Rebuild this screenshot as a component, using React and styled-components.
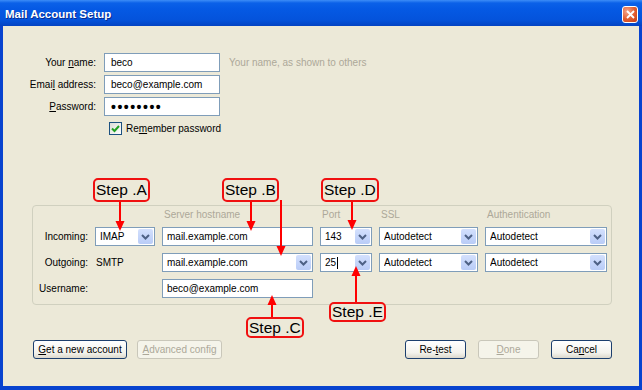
import styled, { createGlobalStyle } from 'styled-components';

const GlobalStyle = createGlobalStyle`
	html, body {
		margin: 0;
		padding: 0;
		background: #ffffff;
	}
	body {
		font-family: 'Liberation Sans', Arial, sans-serif;
		font-size: 10px;
		color: #000;
	}
`;

const Window = styled.div`
	position: relative;
	width: 642px;
	height: 390px;
	box-sizing: border-box;
	display: flex;
	flex-direction: column;
	background: #0843CF;
	overflow: hidden;
`;

const TitleBar = styled.div`
	flex: none;
	height: 26px;
	box-sizing: border-box;
	padding: 2px 4px 0 5px;
	display: flex;
	align-items: center;
	justify-content: space-between;
	background: linear-gradient(#3D8DF7 0px, #0B61E8 3px, #0559E4 9px, #0453DB 20px, #0443C2 26px);
`;

const Title = styled.span`
	color: #fff;
	font-weight: bold;
	font-size: 11.5px;
	text-shadow: 1px 1px 0 #0B2C8E;
`;

const CloseButton = styled.span`
	width: 16px;
	height: 17px;
	box-sizing: border-box;
	border: 1px solid #fff;
	border-radius: 3px;
	background: radial-gradient(circle at 30% 30%, #F4A68C, #E25B2E 55%, #C23E16);
	display: flex;
	align-items: center;
	justify-content: center;
`;

const Body = styled.div`
	flex: 1;
	margin: 0 3px 4px 3px;
	background: #ECE9D8;
	display: flex;
	flex-direction: column;
`;

const IdentityGrid = styled.div`
	display: grid;
	grid-template-columns: 93px 116px auto;
	grid-auto-rows: 19px;
	column-gap: 8px;
	row-gap: 3px;
	align-items: center;
	padding-top: 27px;
`;

const FieldLabel = styled.span`
	text-align: right;
	white-space: nowrap;
`;

const TextBox = styled.div`
	height: 19px;
	box-sizing: border-box;
	border: 1px solid #7F9DB9;
	background: #fff;
	padding-left: ${(p) => (p.$wide ? 4 : 6)}px;
	display: flex;
	align-items: center;
	white-space: nowrap;
	overflow: hidden;
`;

const Dots = styled.span`
	font-size: 14px;
	font-weight: bold;
	letter-spacing: 1.5px;
	line-height: 1;
`;

const Hint = styled.span`
	color: #ACA899;
	margin-left: 1px;
	white-space: nowrap;
`;

const CheckRow = styled.label`
	grid-column: 2 / span 2;
	display: flex;
	align-items: center;
	gap: 4px;
	margin-left: 5px;
`;

const CheckBox = styled.span`
	width: 13px;
	height: 13px;
	box-sizing: border-box;
	border: 1px solid #1C5180;
	background: linear-gradient(135deg, #DCDCD7, #FFFFFF);
	display: flex;
	align-items: center;
	justify-content: center;
`;

const ServerGroup = styled.div`
	margin: 67px 27px 0 29px;
	border: 1px solid #D0D0BF;
	border-radius: 4px;
	padding: 2px 4px 6px 0;
	display: grid;
	grid-template-columns: 55px 60px 151px 52px 99px 122px;
	grid-template-rows: 12px repeat(3, 19px);
	column-gap: 7px;
	row-gap: 7px;
	align-items: center;
`;

const ColumnHead = styled.span`
	color: #ACA899;
	padding-left: 2px;
	white-space: nowrap;
`;

const RowLabel = styled.span`
	text-align: right;
	white-space: nowrap;
`;

const Protocol = styled.span`
	padding-left: 1px;
`;

const ComboBox = styled.div`
	height: 19px;
	box-sizing: border-box;
	border: 1px solid #7F9DB9;
	background: #fff;
	padding-left: 4px;
	display: flex;
	align-items: center;
`;

const ComboText = styled.span`
	flex: 1;
	white-space: nowrap;
	overflow: hidden;
	display: flex;
	align-items: center;
`;

const Caret = styled.span`
	width: 1px;
	height: 12px;
	background: #000;
	margin-left: 1px;
`;

const DropButton = styled.span`
	flex: none;
	width: 15px;
	height: 15px;
	margin-right: 1px;
	border-radius: 2px;
	background: linear-gradient(#D3E0FD, #B9CCF7);
	display: flex;
	align-items: center;
	justify-content: center;
`;

const ButtonRow = styled.div`
	margin-top: 35px;
	padding: 0 27px 0 30px;
	display: flex;
	justify-content: space-between;
`;

const ButtonGroup = styled.div`
	display: flex;
	gap: ${(p) => p.$gap}px;
`;

const Button = styled.button`
	width: ${(p) => p.$w}px;
	height: 19px;
	padding: 0;
	font-family: inherit;
	font-size: 10px;
	border-radius: 3px;
	border: 1px solid ${(p) => (p.disabled ? '#C9C7BA' : '#1C3F6E')};
	color: ${(p) => (p.disabled ? '#ACA899' : '#000')};
	background: ${(p) =>
		p.disabled ? '#F5F4EA' : 'linear-gradient(#FFFFFF, #F3F2EC 70%, #DCD8CC)'};
`;

const Overlay = styled.div`
	position: absolute;
	inset: 0;
	pointer-events: none;
`;

const ArrowLayer = styled.svg`
	position: absolute;
	left: 0;
	top: 0;
`;

const StepTag = styled.span`
	position: absolute;
	left: ${(p) => p.$x}px;
	top: ${(p) => p.$y}px;
	height: ${(p) => p.$h}px;
	box-sizing: border-box;
	padding: 0 1px;
	border: 2px solid #F01010;
	border-radius: 5px;
	background: #ECE9D8;
	font-family: 'Liberation Sans', Arial, sans-serif;
	font-size: 15.5px;
	line-height: ${(p) => p.$h - 4}px;
	color: #000;
	white-space: nowrap;
	display: flex;
	align-items: center;
`;

const Chevron = () => (
	<svg width='9' height='6' viewBox='0 0 9 6'>
		<polyline points='1,1 4.5,4.5 8,1' fill='none' stroke='#4D6185' strokeWidth='2' />
	</svg>
);

const Combo = ({ children }) => (
	<ComboBox>
		<ComboText>{children}</ComboText>
		<DropButton>
			<Chevron />
		</DropButton>
	</ComboBox>
);

const Arrow = ({ x, from, to }) => {
	const dir = to > from ? 1 : -1;
	const base = to - dir * 10;
	return (
		<g>
			<line x1={x} y1={from} x2={x} y2={base} stroke='#FF0000' strokeWidth='2' />
			<polygon points={`${x - 4.5},${base} ${x + 4.5},${base} ${x},${to}`} fill='#FF0000' />
		</g>
	);
};

const arrows = [
	{ x: 120, from: 200, to: 231 },
	{ x: 251, from: 200, to: 231 },
	{ x: 281, from: 200, to: 256 },
	{ x: 352, from: 200, to: 230 },
	{ x: 272, from: 318, to: 295 },
	{ x: 356, from: 304, to: 266 },
];

const steps = [
	{ label: 'Step .A', x: 93, y: 178, h: 24 },
	{ label: 'Step .B', x: 222, y: 178, h: 24 },
	{ label: 'Step .D', x: 321, y: 178, h: 24 },
	{ label: 'Step .C', x: 246, y: 317, h: 21 },
	{ label: 'Step .E', x: 329, y: 302, h: 20 },
];

const App = () => {
	return (
		<>
			<GlobalStyle />
			<Window>
				<TitleBar>
					<Title>Mail Account Setup</Title>
					<CloseButton>
						<svg width='9' height='9' viewBox='0 0 9 9'>
							<path d='M1 1 L8 8 M8 1 L1 8' stroke='#fff' strokeWidth='1.8' />
						</svg>
					</CloseButton>
				</TitleBar>
				<Body>
					<IdentityGrid>
						<FieldLabel>
							Your <u>n</u>ame:
						</FieldLabel>
						<TextBox>beco</TextBox>
						<Hint>Your name, as shown to others</Hint>
						<FieldLabel>
							Emai<u>l</u> address:
						</FieldLabel>
						<TextBox>beco@example.com</TextBox>
						<span />
						<FieldLabel>
							<u>P</u>assword:
						</FieldLabel>
						<TextBox>
							<Dots>••••••••</Dots>
						</TextBox>
						<span />
						<span />
						<CheckRow>
							<CheckBox>
								<svg width='9' height='9' viewBox='0 0 9 9'>
									<path d='M1 4.5 L3.5 7 L8 2' fill='none' stroke='#21A121' strokeWidth='2' />
								</svg>
							</CheckBox>
							<span>
								Re<u>m</u>ember password
							</span>
						</CheckRow>
					</IdentityGrid>

					<ServerGroup>
						<span />
						<span />
						<ColumnHead>Server hostname</ColumnHead>
						<ColumnHead>Port</ColumnHead>
						<ColumnHead>SSL</ColumnHead>
						<ColumnHead>Authentication</ColumnHead>

						<RowLabel>Incoming:</RowLabel>
						<Combo>IMAP</Combo>
						<TextBox $wide>mail.example.com</TextBox>
						<Combo>143</Combo>
						<Combo>Autodetect</Combo>
						<Combo>Autodetect</Combo>

						<RowLabel>Outgoing:</RowLabel>
						<Protocol>SMTP</Protocol>
						<Combo>mail.example.com</Combo>
						<Combo>
							25
							<Caret />
						</Combo>
						<Combo>Autodetect</Combo>
						<Combo>Autodetect</Combo>

						<RowLabel>Username:</RowLabel>
						<span />
						<TextBox $wide>beco@example.com</TextBox>
					</ServerGroup>

					<ButtonRow>
						<ButtonGroup $gap={10}>
							<Button $w={94}>
								<u>G</u>et a new account
							</Button>
							<Button $w={85} disabled>
								<u>A</u>dvanced config
							</Button>
						</ButtonGroup>
						<ButtonGroup $gap={12}>
							<Button $w={61}>
								Re-<u>t</u>est
							</Button>
							<Button $w={61} disabled>
								<u>D</u>one
							</Button>
							<Button $w={61}>
								Ca<u>n</u>cel
							</Button>
						</ButtonGroup>
					</ButtonRow>
				</Body>

				<Overlay>
					<ArrowLayer width='642' height='390'>
						{arrows.map((a, i) => (
							<Arrow key={i} {...a} />
						))}
					</ArrowLayer>
					{steps.map((s) => (
						<StepTag key={s.label} $x={s.x} $y={s.y} $h={s.h}>
							{s.label}
						</StepTag>
					))}
				</Overlay>
			</Window>
		</>
	);
};

export default App;
